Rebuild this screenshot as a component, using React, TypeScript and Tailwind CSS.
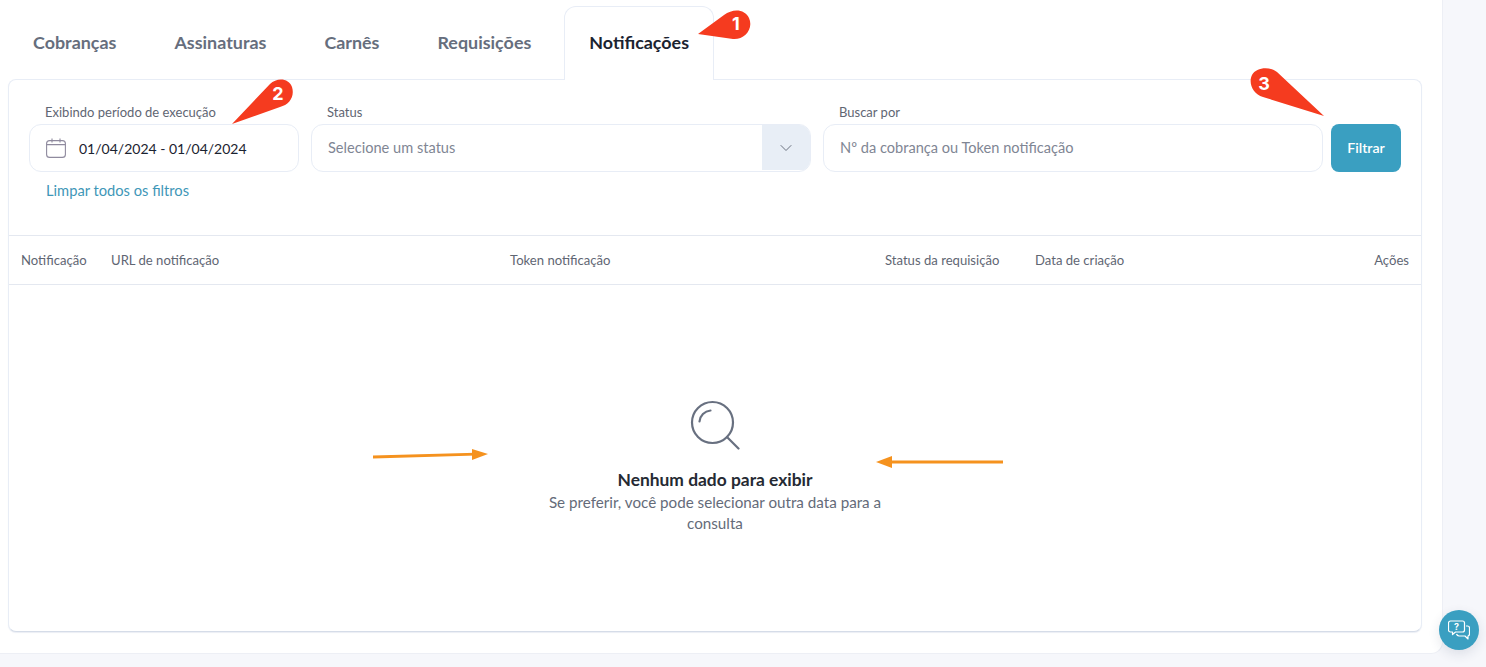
import { ChevronDown } from "lucide-react";

const tabs = ["Cobranças", "Assinaturas", "Carnês", "Requisições"];

const font = "font-['Lato','Noto_Sans',sans-serif]";

function Badge({ className, d, n, nx, ny, w, h }: { className: string; d: string; n: string; nx: string; ny: string; w: number; h: number }) {
  return (
    <div className={`absolute ${className}`} style={{ width: w, height: h }}>
      <svg width={w} height={h} viewBox={`0 0 ${w} ${h}`} className="block">
        <path d={d} fill="#f53b1f" />
      </svg>
      <span className={`absolute ${nx} ${ny} w-5 text-center text-[18px] leading-[18px] font-bold text-white font-['Inter',sans-serif]`}>{n}</span>
    </div>
  );
}

function Arrow({ className, d, head, w }: { className: string; d: string; head: string; w: number }) {
  return (
    <svg width={w} height={14} viewBox={`0 0 ${w} 14`} className={`absolute ${className}`}>
      <path d={d} stroke="#f5921e" strokeWidth="2.8" fill="none" />
      <path d={head} fill="#f5921e" />
    </svg>
  );
}

export default function App() {
  return (
    <div className={`relative h-[667px] w-[1486px] overflow-hidden bg-[#f6f7fb] ${font}`}>
      <div className="h-[654px] w-[1443px] rounded-br-xl border-r border-b border-[#edeff5] bg-white px-2 pt-[6px]">
        <div className="flex h-[73px] gap-2">
          {tabs.map((t) => (
            <div key={t} className="flex items-center px-[25px] text-[17.9px] font-bold text-[#666e7d]">
              {t}
            </div>
          ))}
          <div className="relative -mb-px flex h-[74px] items-center rounded-t-xl border border-b-0 border-[#e8edf6] bg-white px-6 pb-[3px] text-[17.9px] font-bold text-[#1b2330]">
            Notificações
          </div>
        </div>

        <div className="h-[553px] w-[1414px] rounded-lg border border-[#e8edf6] border-b-[#d5dce8] bg-white shadow-[0_1px_1px_rgba(120,140,180,0.15)]">
          <div className="h-[155px] px-5 pt-6">
            <div className="flex items-end">
              <div className="w-[270px]">
                <div className="mb-[4px] pl-4 text-[13px] leading-4 text-[#5f6673]">Exibindo período de execução</div>
                <div className="flex h-12 items-center rounded-xl border border-[#e8edf6] pl-4 text-[14px] text-[#1b2330]">
                  <svg width="20" height="20" viewBox="0 0 20 20" fill="none" stroke="#8f8a9e" strokeWidth="1.1" className="mr-[13px]">
                    <rect x="0.6" y="2.6" width="18.8" height="16.8" rx="3" />
                    <path d="M0.6 6.6h18.8M6 0.5v4M14 0.5v4" />
                  </svg>
                  01/04/2024 - 01/04/2024
                </div>
              </div>
              <div className="ml-3 w-[500px]">
                <div className="mb-[4px] pl-4 text-[13px] leading-4 text-[#5f6673]">Status</div>
                <div className="flex h-12 items-center overflow-hidden rounded-xl border border-[#e8edf6] pb-px text-[14.6px] text-[#7f8694]">
                  <span className="flex-1 pl-4">Selecione um status</span>
                  <span className="flex h-full w-[48px] items-center justify-center bg-[#e8eef6]">
                    <ChevronDown size={20} strokeWidth={1.2} className="text-[#6b7280]" />
                  </span>
                </div>
              </div>
              <div className="ml-3 w-[500px]">
                <div className="mb-[4px] pl-4 text-[13px] leading-4 text-[#5f6673]">Buscar por</div>
                <div className="flex h-12 items-center rounded-xl border border-[#e8edf6] pb-px pl-4 text-[14.6px] text-[#7f8694]">
                  Nº da cobrança ou Token notificação
                </div>
              </div>
              <div className="ml-2 flex h-12 w-[70px] items-center justify-center rounded-lg bg-[#3a9fc1] text-[14.2px] font-semibold text-white">
                Filtrar
              </div>
            </div>
            <div className="mt-[10px] pl-[17px] text-[14.7px] leading-[17px] text-[#3f97b8]">Limpar todos os filtros</div>
          </div>

          <div className="flex h-[50px] items-center border-y border-[#e4e8f0] px-3 pt-px text-[13.1px] text-[#5f6673]">
            <span className="w-[90px]">Notificação</span>
            <span className="w-[399px]">URL de notificação</span>
            <span className="w-[375px]">Token notificação</span>
            <span className="w-[150px]">Status da requisição</span>
            <span className="flex-1">Data de criação</span>
            <span>Ações</span>
          </div>

          <div className="flex flex-col items-center pt-[115px]">
            <svg width="50" height="50" viewBox="0 0 50 50" fill="none" stroke="#687080" strokeWidth="2.2" strokeLinecap="round">
              <circle cx="22.5" cy="22.5" r="20.5" />
              <path d="M37 37l11.500 11.500" />
              <path d="M9.500 21.500c.5-6 5-10.500 11-11" />
            </svg>
            <div className="mt-[20px] text-[17.4px] leading-5 font-bold text-[#252a33]">Nenhum dado para exibir</div>
            <div className="mt-[2px] w-[350px] text-center text-[15.200px] leading-[21px] text-[#646b79]">
              Se preferir, você pode selecionar outra data para a consulta
            </div>
          </div>
        </div>
      </div>

      <Badge className="left-[697px] top-[9px]" w={55} h={32} n="1" nx="left-[29px]" ny="top-[6px]" d="M1 25 L27 6 C36 -1 48 0 52 9 C57 20 47 31 36 30 Z" />
      <Badge className="left-[231px] top-[78px]" w={63} h={47} n="2" nx="left-[37px]" ny="top-[7px]" d="M1 46 L39 6 C46 -1 58 0 61 9 C64 19 58 27 49 29 Z" />
      <Badge className="left-[1250px] top-[68px]" w={75} h={49} n="3" nx="left-[4px]" ny="top-[7px]" d="M74 48 L13 29 C3 26 -2 15 2 7 C6 -1 20 -2 27 4 Z" />

      <Arrow className="left-[372px] top-[448px]" w={118} d="M1 9 L104 6.200" head="M100 1 L116 6 L100 12 Z" />
      <Arrow className="left-[876px] top-[455px]" w={128} d="M127 7 L14 7" head="M16 1 L0 7 L16 13 Z" />

      <div className="absolute left-[1439px] top-[610px] flex h-10 w-10 items-center justify-center rounded-full bg-[#3a9fc1] shadow-[0_4px_12px_rgba(30,50,80,0.12)]">
        <svg width="22" height="21" viewBox="0 0 22 21" fill="none" stroke="white" strokeWidth="1.2" strokeLinejoin="round">
          <path d="M2.500 1h12a2 2 0 0 1 2 2v7a2 2 0 0 1-2 2H7.500l-3 2.500V12h-2a2 2 0 0 1-2-2V3a2 2 0 0 1 2-2Z" />
          <path d="M18 6h1.500a2 2 0 0 1 2 2v6a2 2 0 0 1-1.500 2v3l-3-3h-6a3 3 0 0 1-2.500-2" />
          <text x="8.500" y="10" textAnchor="middle" fontSize="9" fontWeight="700" fill="white" stroke="none" fontFamily="Inter, sans-serif">?</text>
        </svg>
      </div>
    </div>
  );
}
